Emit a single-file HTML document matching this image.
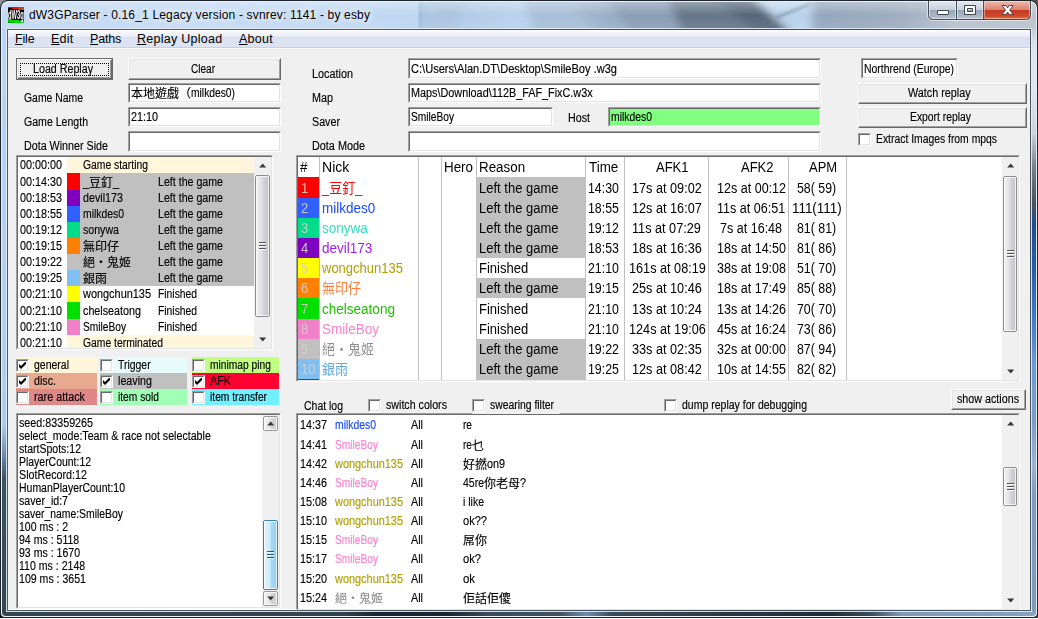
<!DOCTYPE html><html><head><meta charset="utf-8"><title>dW3GParser</title><style>
*{box-sizing:border-box;margin:0;padding:0}
html,body{width:1038px;height:619px;overflow:hidden;background:#fff}
body{position:relative;font-family:"Liberation Sans","Noto Sans CJK TC",sans-serif;font-size:12px;color:#000;line-height:13px}
.a{position:absolute;white-space:nowrap}
.t{position:absolute;white-space:nowrap;line-height:13px;transform-origin:0 0;-webkit-text-stroke:.15px}
.c{font-size:12px;transform:scaleX(.999)}
.edit{position:absolute;background:#fff;border:1px solid;border-color:#a0a0a0 #fff #fff #a0a0a0;overflow:hidden}
.edit:before{content:"";position:absolute;left:0;top:0;right:0;bottom:0;border:1px solid;border-color:#696969 #e3e3e3 #e3e3e3 #696969;pointer-events:none;z-index:3}
.btn{position:absolute;background:#f0f0f0;border:1px solid;border-color:#fff #696969 #696969 #fff;text-align:center}
.btn:before{content:"";position:absolute;left:0;top:0;right:0;bottom:0;border:1px solid;border-color:#e3e3e3 #a0a0a0 #a0a0a0 #e3e3e3}
.cb{position:absolute;width:13px;height:13px;background:#fff;border:1px solid;border-color:#a0a0a0 #fff #fff #a0a0a0}
.cb:before{content:"";position:absolute;left:0;top:0;right:0;bottom:0;border:1px solid;border-color:#696969 #e3e3e3 #e3e3e3 #696969}
.cb svg{position:absolute;left:2px;top:2px}
.tb{font-size:13px;line-height:15px}
.tb .t{line-height:15px}
.sb{position:absolute;background:#f0f0f0}
.thumb{position:absolute;border:1px solid #8e8e8e;border-radius:2px;background:linear-gradient(90deg,#f1f1f1 0,#e3e3e5 40%,#d3d3d7 60%,#c1c1c6 100%)}
.thumb:before{content:"";position:absolute;left:0;top:0;right:0;bottom:0;border:1px solid rgba(255,255,255,.75);border-radius:1px}
.thumb.hot{border-color:#3c7fb1;background:linear-gradient(90deg,#e0f3fd 0,#cfeafa 48%,#a8daf5 52%,#95cff0 100%)}
.grip{position:absolute;left:3px;width:7px;height:8px;top:50%;margin-top:-4px;background:linear-gradient(180deg,#50545a 0,#50545a 1px,#fff 1px,#fff 2px,transparent 2px,transparent 3px,#50545a 3px,#50545a 4px,#fff 4px,#fff 5px,transparent 5px,transparent 6px,#50545a 6px,#50545a 7px,#fff 7px,#fff 8px)}
.hot .grip{background:linear-gradient(180deg,#1c5a8c 0,#1c5a8c 1px,#e8f6fd 1px,#e8f6fd 2px,transparent 2px,transparent 3px,#1c5a8c 3px,#1c5a8c 4px,#e8f6fd 4px,#e8f6fd 5px,transparent 5px,transparent 6px,#1c5a8c 6px,#1c5a8c 7px,#e8f6fd 7px,#e8f6fd 8px)}
.sbtn{position:absolute;width:15px;height:15px;border:1px solid #989898;border-radius:2px;background:linear-gradient(90deg,#f3f3f3 0,#e4e4e6 48%,#d6d6d9 52%,#cdcdd0 100%)}
.sbtn:before{content:"";position:absolute;left:0;top:0;right:0;bottom:0;border:1px solid rgba(255,255,255,.8);border-radius:1px}
</style></head><body>
<svg class="a" style="left:0;top:0" width="1038" height="619" viewBox="0 0 1038 619"><defs><linearGradient id="gl" x1="0" y1="0" x2="0" y2="1"><stop offset="0" stop-color="#bcd4f1"/><stop offset=".68" stop-color="#aecbee"/><stop offset=".72" stop-color="#7d9ab8"/><stop offset=".77" stop-color="#3e5463"/><stop offset="1" stop-color="#34464f"/></linearGradient><linearGradient id="gr" x1="0" y1="0" x2="0" y2="1"><stop offset="0" stop-color="#c3ccd6"/><stop offset=".03" stop-color="#dde3e9"/><stop offset=".1" stop-color="#e3e7eb"/><stop offset=".18" stop-color="#cdd3d9"/><stop offset=".24" stop-color="#767e87"/><stop offset=".3" stop-color="#4a525b"/><stop offset=".335" stop-color="#1d4e96"/><stop offset=".42" stop-color="#2460b0"/><stop offset=".5" stop-color="#3f7cc8"/><stop offset=".58" stop-color="#6a9cd6"/><stop offset=".68" stop-color="#7c9fc6"/><stop offset=".75" stop-color="#9ab4d2"/><stop offset=".8" stop-color="#7c9cc0"/><stop offset="1" stop-color="#7f9bb8"/></linearGradient><linearGradient id="gb" x1="0" y1="0" x2="1" y2="0"><stop offset="0" stop-color="#34464f"/><stop offset=".33" stop-color="#32444e"/><stop offset=".36" stop-color="#1b2630"/><stop offset=".43" stop-color="#1b2630"/><stop offset=".47" stop-color="#3a4c58"/><stop offset=".54" stop-color="#41535f"/><stop offset=".565" stop-color="#6f8fb0"/><stop offset=".59" stop-color="#3a4c58"/><stop offset=".7" stop-color="#2a3a45"/><stop offset=".8" stop-color="#1f2c36"/><stop offset=".84" stop-color="#3a4c5a"/><stop offset=".87" stop-color="#7f9bb8"/><stop offset="1" stop-color="#86a2c0"/></linearGradient><linearGradient id="gt" x1="0" y1="0" x2="1" y2="0"><stop offset="0" stop-color="#bdd5f1"/><stop offset=".2" stop-color="#c2d9f3"/><stop offset=".402" stop-color="#bad4f1"/><stop offset=".405" stop-color="#a4c0df"/><stop offset=".42" stop-color="#adc8e6"/><stop offset=".46" stop-color="#b0cae8"/><stop offset=".5" stop-color="#b6d0ec"/><stop offset=".55" stop-color="#a0b8d3"/><stop offset=".62" stop-color="#8aa0b9"/><stop offset=".8" stop-color="#8fa3bb"/><stop offset=".87" stop-color="#9aaabd"/><stop offset=".92" stop-color="#b3bfcd"/><stop offset="1" stop-color="#b6c0cb"/></linearGradient><linearGradient id="gv" x1="0" y1="0" x2="0" y2="1"><stop offset="0" stop-color="#fff" stop-opacity=".35"/><stop offset=".5" stop-color="#fff" stop-opacity=".05"/><stop offset="1" stop-color="#fff" stop-opacity=".12"/></linearGradient><filter id="bl" x="-5%" y="-50%" width="110%" height="200%"><feGaussianBlur stdDeviation="5 3"/></filter><filter id="bl2" x="-5%" y="-50%" width="110%" height="200%"><feGaussianBlur stdDeviation="1.5"/></filter><clipPath id="ct"><path d="M2 28V8a6 6 0 0 1 6-6H1030a6 6 0 0 1 6 6V28z"/></clipPath></defs><rect x="0" y="0" width="12" height="12" fill="#8c9196"/><rect x="1026" y="0" width="12" height="12" fill="#55524f"/><rect x="0" y="606" width="12" height="12" fill="#05080a"/><rect x="1026" y="606" width="12" height="12" fill="#4a4d50"/><path d="M0 618V8a8 8 0 0 1 8-8H1030a8 8 0 0 1 8 8V614a4 4 0 0 1-4 4H4a4 4 0 0 1-4-4z" fill="#1d242b"/><path d="M1 613V8a7 7 0 0 1 7-7H1030a7 7 0 0 1 7 7V613a4 4 0 0 1-4 4H5a4 4 0 0 1-4-4z" fill="#eaf1f8"/><path d="M2 612V8a6 6 0 0 1 6-6H1030a6 6 0 0 1 6 6V612a4 4 0 0 1-4 4H6a4 4 0 0 1-4-4z" fill="url(#gt)"/><g clip-path="url(#ct)"><g filter="url(#bl)"><polygon points="600,-10 680,-10 700,40 640,40" fill="#8499b2"/><polygon points="665,-10 725,-10 795,40 685,40" fill="#5d6f83"/><polygon points="705,-10 745,-10 800,40 765,40" fill="#4f6074"/><polygon points="745,-10 812,-10 812,40 800,40" fill="#bcd6ee"/><polygon points="770,8 812,2 812,40 800,40" fill="#b6d1ec"/><polygon points="440,-10 470,-10 450,40 425,40" fill="#a9c1dd"/><polygon points="520,-10 560,-10 600,40 540,40" fill="#a4bbd6"/></g><rect x="419" y="2" width="2" height="26" fill="#8fa9c8" opacity=".7" filter="url(#bl2)"/><path d="M775 18L810 4" stroke="#7f93a8" stroke-width="2.500" filter="url(#bl2)"/><rect x="2" y="2" width="1034" height="26" fill="url(#gv)"/></g><rect x="2" y="28" width="5" height="584" fill="url(#gl)"/><rect x="1031" y="28" width="5" height="584" fill="url(#gr)"/><path d="M2 611H1036V612a4 4 0 0 1-4 4H6a4 4 0 0 1-4-4z" fill="url(#gb)"/><rect x="2" y="440" width="5" height="176" fill="url(#gl)" opacity="0"/><rect x="6.500" y="28.500" width="1025" height="583" fill="none" stroke="#e4edf6" stroke-opacity=".9"/><rect x="7.500" y="29.500" width="1023" height="581" fill="none" stroke="#27323b" stroke-opacity=".75"/></svg>
<div class="a" id="client" style="left:8px;top:30px;width:1022px;height:580px;background:#f0f0f0"></div>
<div class="a" style="left:8px;top:30px;width:1022px;height:19px;background:linear-gradient(180deg,#fff 0,#f4f6fb 2px,#e9ecf6 7px,#dae0f0 7px,#dfe4f3 17px,#c9cfe0 17px,#c9cfe0 18px,#f6f6f9 18px)"></div>
<svg class="a" style="left:8px;top:7px" width="16" height="16" viewBox="0 0 16 16"><defs><linearGradient id="icr" x1="0" y1="0" x2="1" y2="0"><stop offset="0" stop-color="#ff0000"/><stop offset=".55" stop-color="#f00808"/><stop offset=".75" stop-color="#b04818"/><stop offset="1" stop-color="#a85a20"/></linearGradient><linearGradient id="icg" x1="0" y1="1" x2="1" y2="0"><stop offset="0" stop-color="#007000"/><stop offset=".3" stop-color="#00d800"/><stop offset="1" stop-color="#00f000"/></linearGradient></defs><rect width="16" height="16" fill="#000"/><path d="M0 0H16V3H10V2H4V1H0z" fill="url(#icr)"/><path d="M0 16H16V14H11V13H4V12H0z" fill="url(#icg)"/><g opacity=".99"><text transform="scale(.58,1.35)" x="0" y="8.800" font-family="Liberation Sans,sans-serif" font-weight="bold" font-size="10" fill="#fff" style="-webkit-text-stroke:0">dW3g</text></g></svg>
<div class="t" style="left:29px;top:8px;letter-spacing:0.167px;text-shadow:0 0 6px #fff,0 0 10px #fff;font-size:12px;line-height:14px;-webkit-text-stroke:0;">dW3GParser - 0.16_1 Legacy version - svnrev: 1141 - by esby</div>
<div class="t" style="left:15px;top:32px;font-size:12.5px;line-height:15px;-webkit-text-stroke:0;letter-spacing:-0.160px"><u>F</u>ile</div>
<div class="t" style="left:51px;top:32px;font-size:12.5px;line-height:15px;-webkit-text-stroke:0;letter-spacing:0.240px"><u>E</u>dit</div>
<div class="t" style="left:90px;top:32px;font-size:12.5px;line-height:15px;-webkit-text-stroke:0;letter-spacing:-0.193px"><u>P</u>aths</div>
<div class="t" style="left:137px;top:32px;font-size:12.5px;line-height:15px;-webkit-text-stroke:0;letter-spacing:0.270px"><u>R</u>eplay Upload</div>
<div class="t" style="left:239px;top:32px;font-size:12.5px;line-height:15px;-webkit-text-stroke:0;letter-spacing:0.267px"><u>A</u>bout</div>
<svg class="a" style="left:924px;top:0" width="112" height="24" viewBox="924 0 112 24"><defs><linearGradient id="cbg" x1="0" y1="0" x2="0" y2="1"><stop offset="0" stop-color="#e3e9f0"/><stop offset=".45" stop-color="#c6d0dc"/><stop offset=".5" stop-color="#98a6b7"/><stop offset="1" stop-color="#b9c4d1"/></linearGradient><linearGradient id="cbr" x1="0" y1="0" x2="0" y2="1"><stop offset="0" stop-color="#efb9ac"/><stop offset=".45" stop-color="#dc8371"/><stop offset=".5" stop-color="#c53b22"/><stop offset=".8" stop-color="#cf4b2c"/><stop offset="1" stop-color="#e08a5a"/></linearGradient><clipPath id="cbc"><path d="M928.500 1V15.500a4 4 0 0 0 4 4H1026.500a4 4 0 0 0 4-4V1z"/></clipPath></defs><path d="M927.500 1V16a4.500 4.500 0 0 0 4.500 4.500H1027a4.500 4.500 0 0 0 4.500-4.500V1" fill="none" stroke="#fff" stroke-opacity=".55"/><g clip-path="url(#cbc)"><rect x="928" y="1" width="56" height="19" fill="url(#cbg)"/><rect x="984" y="1" width="47" height="19" fill="url(#cbr)"/><rect x="929.500" y="1.500" width="26" height="17" fill="none" stroke="#fff" stroke-opacity=".5"/><rect x="957.500" y="1.500" width="25" height="17" fill="none" stroke="#fff" stroke-opacity=".5"/><rect x="984.500" y="1.500" width="45" height="17" rx="2" fill="none" stroke="#fff" stroke-opacity=".4"/></g><path d="M928.500 1V15.500a4 4 0 0 0 4 4H1026.500a4 4 0 0 0 4-4V1" fill="none" stroke="#434d57"/><path d="M956.500 1V19M983.500 1V19" stroke="#434d57"/><rect x="937.500" y="10.500" width="11" height="4" rx=".5" fill="#fff" stroke="#3e4852"/><path d="M964.500 5.500h11v9h-11zM967.500 8.500v3h5v-3z" fill="#fff" fill-rule="evenodd" stroke="#3e4852"/><path d="M1002 5.500h4l1.600 2.400 1.600-2.400h4l-3.500 4.500 3.500 4.500h-4l-1.600-2.400-1.600 2.400h-4l3.500-4.500z" fill="#fff" stroke="#4a3a3a" stroke-width=".9"/></svg>
<div class="btn" style="left:16px;top:58px;width:97px;height:22px;border-color:#696969;background:#f0f0f0"><div class="a" style="left:0;top:0;right:0;bottom:0;border:1px solid;border-color:#fff #696969 #696969 #fff"></div><div class="a" style="left:1px;top:1px;right:1px;bottom:1px;border:1px solid;border-color:#e3e3e3 #a0a0a0 #a0a0a0 #e3e3e3"></div><div class="a" style="left:3px;top:4px;right:3px;bottom:3px;border:1px dotted #000"></div></div>
<div class="t" style="left:33px;top:63px;transform:scaleX(0.8904);">Load Replay</div>
<div class="btn" style="left:128px;top:58px;width:153px;height:22px"></div>
<div class="t" style="left:191px;top:63px;transform:scaleX(0.8369);">Clear</div>
<div class="t" style="left:24px;top:92px;transform:scaleX(0.8674);">Game Name</div>
<div class="t" style="left:24px;top:116px;transform:scaleX(0.8802);">Game Length</div>
<div class="t" style="left:24px;top:140px;transform:scaleX(0.8932);">Dota Winner Side</div>
<div class="edit" style="left:128px;top:83px;width:153px;height:20px"></div>
<div class="t c" style="left:131px;top:88px;">本地遊戲（</div>
<div class="t" style="left:191px;top:87px;transform:scaleX(0.8569);">milkdes0)</div>
<div class="edit" style="left:128px;top:107px;width:153px;height:20px"></div>
<div class="t" style="left:131px;top:111px;transform:scaleX(0.8991);">21:10</div>
<div class="edit" style="left:128px;top:131px;width:153px;height:21px"></div>
<div class="t" style="left:312px;top:68px;transform:scaleX(0.9037);">Location</div>
<div class="t" style="left:312px;top:92px;transform:scaleX(0.8996);">Map</div>
<div class="t" style="left:312px;top:116px;transform:scaleX(0.8932);">Saver</div>
<div class="t" style="left:312px;top:140px;transform:scaleX(0.9029);">Dota Mode</div>
<div class="edit" style="left:408px;top:58px;width:413px;height:21px"></div>
<div class="t" style="left:411px;top:63px;transform:scaleX(0.9221);">C:\Users\Alan.DT\Desktop\SmileBoy .w3g</div>
<div class="edit" style="left:408px;top:83px;width:413px;height:20px"></div>
<div class="t" style="left:411px;top:87px;transform:scaleX(0.9026);">Maps\Download\112B_FAF_FixC.w3x</div>
<div class="edit" style="left:408px;top:107px;width:145px;height:20px"></div>
<div class="t" style="left:411px;top:111px;transform:scaleX(0.8484);">SmileBoy</div>
<div class="t" style="left:568px;top:112px;transform:scaleX(0.8916);">Host</div>
<div class="edit" style="left:608px;top:107px;width:213px;height:20px;background:#80ff80"></div>
<div class="t" style="left:611px;top:111px;transform:scaleX(0.8659);">milkdes0</div>
<div class="edit" style="left:408px;top:131px;width:413px;height:21px"></div>
<div class="edit" style="left:861px;top:58px;width:97px;height:21px"></div>
<div class="t" style="left:864px;top:63px;transform:scaleX(0.8706);">Northrend (Europe)</div>
<div class="btn" style="left:858px;top:83px;width:169px;height:21px"></div>
<div class="t" style="left:908px;top:87px;transform:scaleX(0.8997);">Watch replay</div>
<div class="btn" style="left:858px;top:107px;width:169px;height:21px"></div>
<div class="t" style="left:910px;top:111px;transform:scaleX(0.8628);">Export replay</div>
<div class="cb" style="left:858px;top:133px"></div>
<div class="t" style="left:876px;top:133px;transform:scaleX(0.8640);">Extract Images from mpqs</div>
<div class="edit" id="evlist" style="left:16px;top:155px;width:257px;height:195px">
<div class="a" style="left:50px;top:1px;width:187px;height:16px;background:#fff6dc"></div>
<div class="t" style="left:3px;top:3px;transform:scaleX(0.8991);">00:00:00</div>
<div class="t" style="left:65.5px;top:3px;transform:scaleX(0.8625);">Game starting</div>
<div class="a" style="left:50px;top:17px;width:187px;height:17px;background:#c0c0c0"></div>
<div class="a" style="left:50px;top:17px;width:13px;height:17px;background:#ff0000"></div>
<div class="t" style="left:3px;top:20px;transform:scaleX(0.8991);">00:14:30</div>
<div class="t" style="left:65.5px;top:20px;transform:scaleX(0.8990);">_</div>
<div class="t c" style="left:71.5px;top:21px;">豆釘</div>
<div class="t" style="left:95.5px;top:20px;transform:scaleX(0.8990);">_</div>
<div class="t" style="left:141px;top:20px;transform:scaleX(0.8858);">Left the game</div>
<div class="a" style="left:50px;top:34px;width:187px;height:16px;background:#c0c0c0"></div>
<div class="a" style="left:50px;top:34px;width:13px;height:16px;background:#8000c0"></div>
<div class="t" style="left:3px;top:36px;transform:scaleX(0.8991);">00:18:53</div>
<div class="t" style="left:65.5px;top:36px;transform:scaleX(0.8948);">devil173</div>
<div class="t" style="left:141px;top:36px;transform:scaleX(0.8858);">Left the game</div>
<div class="a" style="left:50px;top:50px;width:187px;height:16px;background:#c0c0c0"></div>
<div class="a" style="left:50px;top:50px;width:13px;height:16px;background:#3060ff"></div>
<div class="t" style="left:3px;top:52px;transform:scaleX(0.8991);">00:18:55</div>
<div class="t" style="left:65.5px;top:52px;transform:scaleX(0.8659);">milkdes0</div>
<div class="t" style="left:141px;top:52px;transform:scaleX(0.8858);">Left the game</div>
<div class="a" style="left:50px;top:66px;width:187px;height:16px;background:#c0c0c0"></div>
<div class="a" style="left:50px;top:66px;width:13px;height:16px;background:#00dc8c"></div>
<div class="t" style="left:3px;top:68px;transform:scaleX(0.8991);">00:19:12</div>
<div class="t" style="left:65.5px;top:68px;transform:scaleX(0.8848);">sonywa</div>
<div class="t" style="left:141px;top:68px;transform:scaleX(0.8858);">Left the game</div>
<div class="a" style="left:50px;top:82px;width:187px;height:16px;background:#c0c0c0"></div>
<div class="a" style="left:50px;top:82px;width:13px;height:16px;background:#ff8000"></div>
<div class="t" style="left:3px;top:84px;transform:scaleX(0.8991);">00:19:15</div>
<div class="t c" style="left:65.5px;top:85px;">無印仔</div>
<div class="t" style="left:141px;top:84px;transform:scaleX(0.8858);">Left the game</div>
<div class="a" style="left:50px;top:98px;width:187px;height:16px;background:#c0c0c0"></div>
<div class="a" style="left:50px;top:98px;width:13px;height:16px;background:#c0c0c0"></div>
<div class="t" style="left:3px;top:100px;transform:scaleX(0.8991);">00:19:22</div>
<div class="t c" style="left:65.5px;top:101px;">絕‧鬼姬</div>
<div class="t" style="left:141px;top:100px;transform:scaleX(0.8858);">Left the game</div>
<div class="a" style="left:50px;top:114px;width:187px;height:16px;background:#c0c0c0"></div>
<div class="a" style="left:50px;top:114px;width:13px;height:16px;background:#80c0f0"></div>
<div class="t" style="left:3px;top:116px;transform:scaleX(0.8991);">00:19:25</div>
<div class="t c" style="left:65.5px;top:117px;">銀雨</div>
<div class="t" style="left:141px;top:116px;transform:scaleX(0.8858);">Left the game</div>
<div class="a" style="left:50px;top:130px;width:187px;height:16px;background:#fff"></div>
<div class="a" style="left:50px;top:130px;width:13px;height:16px;background:#ffff00"></div>
<div class="t" style="left:3px;top:132px;transform:scaleX(0.8991);">00:21:10</div>
<div class="t" style="left:65.5px;top:132px;transform:scaleX(0.9099);">wongchun135</div>
<div class="t" style="left:141px;top:132px;transform:scaleX(0.8598);">Finished</div>
<div class="a" style="left:50px;top:146px;width:187px;height:17px;background:#fff"></div>
<div class="a" style="left:50px;top:146px;width:13px;height:17px;background:#00e000"></div>
<div class="t" style="left:3px;top:149px;transform:scaleX(0.8991);">00:21:10</div>
<div class="t" style="left:65.5px;top:149px;transform:scaleX(0.8962);">chelseatong</div>
<div class="t" style="left:141px;top:149px;transform:scaleX(0.8598);">Finished</div>
<div class="a" style="left:50px;top:163px;width:187px;height:16px;background:#fff"></div>
<div class="a" style="left:50px;top:163px;width:13px;height:16px;background:#f080c8"></div>
<div class="t" style="left:3px;top:165px;transform:scaleX(0.8991);">00:21:10</div>
<div class="t" style="left:65.5px;top:165px;transform:scaleX(0.8484);">SmileBoy</div>
<div class="t" style="left:141px;top:165px;transform:scaleX(0.8598);">Finished</div>
<div class="a" style="left:50px;top:179px;width:187px;height:16px;background:#fff6dc"></div>
<div class="t" style="left:3px;top:181px;transform:scaleX(0.8991);">00:21:10</div>
<div class="t" style="left:65.5px;top:181px;transform:scaleX(0.8629);">Game terminated</div>
<div class="sb" style="left:237px;top:1px;width:17px;height:191px"><svg class="a" style="left:5px;top:6px" width="8" height="5" viewBox="0 0 8 5"><path d="M0.200 4.500L3.700 0.400L7.200 4.500z" fill="#383838"/></svg><svg class="a" style="left:5px;top:180px" width="8" height="5" viewBox="0 0 8 5"><path d="M0.200 0.500L3.700 4.600L7.200 0.500z" fill="#383838"/></svg><div class="thumb" style="left:1px;top:18px;width:15px;height:142px"><div class="grip"></div></div></div>
</div>
<div class="a" style="left:16px;top:357px;width:81px;height:16px;background:#fff6dc"></div>
<div class="cb" style="left:16px;top:359px"><svg width="7" height="7" viewBox="0 0 7 7"><path d="M0 2v3l2 2 5-5V-1L2 4z" fill="#000"/></svg></div>
<div class="t" style="left:34px;top:359px;transform:scaleX(0.8743);">general</div>
<div class="a" style="left:100px;top:357px;width:87px;height:16px;background:#e8fbfb"></div>
<div class="cb" style="left:100px;top:359px"></div>
<div class="t" style="left:118px;top:359px;transform:scaleX(0.8682);">Trigger</div>
<div class="a" style="left:192px;top:357px;width:87px;height:16px;background:#c0ff80"></div>
<div class="cb" style="left:192px;top:359px"></div>
<div class="t" style="left:210px;top:359px;transform:scaleX(0.8547);">minimap ping</div>
<div class="a" style="left:16px;top:373px;width:81px;height:16px;background:#e9a98e"></div>
<div class="cb" style="left:16px;top:375px"><svg width="7" height="7" viewBox="0 0 7 7"><path d="M0 2v3l2 2 5-5V-1L2 4z" fill="#000"/></svg></div>
<div class="t" style="left:34px;top:375px;transform:scaleX(0.8916);">disc.</div>
<div class="a" style="left:100px;top:373px;width:87px;height:16px;background:#c0c0c0"></div>
<div class="cb" style="left:100px;top:375px"><svg width="7" height="7" viewBox="0 0 7 7"><path d="M0 2v3l2 2 5-5V-1L2 4z" fill="#000"/></svg></div>
<div class="t" style="left:118px;top:375px;transform:scaleX(0.8941);">leaving</div>
<div class="a" style="left:192px;top:373px;width:87px;height:16px;background:#ff0030"></div>
<div class="cb" style="left:192px;top:375px"><svg width="7" height="7" viewBox="0 0 7 7"><path d="M0 2v3l2 2 5-5V-1L2 4z" fill="#000"/></svg></div>
<div class="t" style="left:210px;top:375px;transform:scaleX(0.8998);">AFK</div>
<div class="a" style="left:16px;top:389px;width:81px;height:16px;background:#e08888"></div>
<div class="cb" style="left:16px;top:391px"></div>
<div class="t" style="left:34px;top:391px;transform:scaleX(0.8996);">rare attack</div>
<div class="a" style="left:100px;top:389px;width:87px;height:16px;background:#a0ffb4"></div>
<div class="cb" style="left:100px;top:391px"></div>
<div class="t" style="left:118px;top:391px;transform:scaleX(0.8539);">item sold</div>
<div class="a" style="left:192px;top:389px;width:87px;height:16px;background:#70f0ff"></div>
<div class="cb" style="left:192px;top:391px"></div>
<div class="t" style="left:210px;top:391px;transform:scaleX(0.8548);">item transfer</div>
<div class="edit" id="info" style="left:16px;top:413px;width:265px;height:196px">
<div class="t" style="left:2px;top:3px;transform:scaleX(0.8943);">seed:83359265</div>
<div class="t" style="left:2px;top:16px;transform:scaleX(0.8876);">select_mode:Team &amp; race not selectable</div>
<div class="t" style="left:2px;top:29px;transform:scaleX(0.8769);">startSpots:12</div>
<div class="t" style="left:2px;top:42px;transform:scaleX(0.8704);">PlayerCount:12</div>
<div class="t" style="left:2px;top:55px;transform:scaleX(0.8942);">SlotRecord:12</div>
<div class="t" style="left:2px;top:68px;transform:scaleX(0.8731);">HumanPlayerCount:10</div>
<div class="t" style="left:2px;top:81px;transform:scaleX(0.8850);">saver_id:7</div>
<div class="t" style="left:2px;top:94px;transform:scaleX(0.8663);">saver_name:SmileBoy</div>
<div class="t" style="left:2px;top:107px;transform:scaleX(0.8746);">100 ms : 2</div>
<div class="t" style="left:2px;top:120px;transform:scaleX(0.8793);">94 ms : 5118</div>
<div class="t" style="left:2px;top:133px;transform:scaleX(0.8793);">93 ms : 1670</div>
<div class="t" style="left:2px;top:146px;transform:scaleX(0.8810);">110 ms : 2148</div>
<div class="t" style="left:2px;top:159px;transform:scaleX(0.8810);">109 ms : 3651</div>
<div class="sb" style="left:245px;top:1px;width:17px;height:192px"><div class="sbtn" style="left:1px;top:1px"></div><div class="sbtn" style="left:1px;top:176px"></div><svg class="a" style="left:5px;top:6px" width="8" height="5" viewBox="0 0 8 5"><path d="M0.200 4.500L3.700 0.400L7.200 4.500z" fill="#383838"/></svg><svg class="a" style="left:5px;top:181px" width="8" height="5" viewBox="0 0 8 5"><path d="M0.200 0.500L3.700 4.600L7.200 0.500z" fill="#383838"/></svg><div class="thumb hot" style="left:1px;top:105px;width:15px;height:70px"><div class="grip"></div></div></div>
</div>
<div class="edit tb" id="ptable" style="left:296px;top:155px;width:724px;height:227px">
<div class="a" style="left:1px;top:1px;width:704px;height:223px;overflow:hidden;background:#fff">
<div class="a" style="left:21px;top:0;width:1px;height:223px;background:#c0c0c0"></div>
<div class="a" style="left:120px;top:0;width:1px;height:223px;background:#c0c0c0"></div>
<div class="a" style="left:143px;top:0;width:1px;height:223px;background:#c0c0c0"></div>
<div class="a" style="left:178px;top:0;width:1px;height:223px;background:#c0c0c0"></div>
<div class="a" style="left:287px;top:0;width:1px;height:223px;background:#c0c0c0"></div>
<div class="a" style="left:326px;top:0;width:1px;height:223px;background:#c0c0c0"></div>
<div class="a" style="left:410px;top:0;width:1px;height:223px;background:#c0c0c0"></div>
<div class="a" style="left:490px;top:0;width:1px;height:223px;background:#c0c0c0"></div>
<div class="a" style="left:548px;top:0;width:1px;height:223px;background:#c0c0c0"></div>
<div class="t" style="left:2px;top:2px;font-size:14px;line-height:16px;-webkit-text-stroke:0;transform:scaleX(0.9565);">#</div>
<div class="t" style="left:24px;top:2px;font-size:14px;line-height:16px;-webkit-text-stroke:0;transform:scaleX(1.0029);">Nick</div>
<div class="t" style="left:146px;top:2px;font-size:14px;line-height:16px;-webkit-text-stroke:0;transform:scaleX(0.9565);">Hero</div>
<div class="t" style="left:181px;top:2px;font-size:14px;line-height:16px;-webkit-text-stroke:0;transform:scaleX(0.9565);">Reason</div>
<div class="t" style="left:291px;top:2px;font-size:14px;line-height:16px;-webkit-text-stroke:0;transform:scaleX(0.9565);">Time</div>
<div class="t" style="left:357.7px;top:2px;font-size:14px;line-height:16px;-webkit-text-stroke:0;transform:scaleX(0.9286);">AFK1</div>
<div class="t" style="left:442.7px;top:2px;font-size:14px;line-height:16px;-webkit-text-stroke:0;transform:scaleX(0.9286);">AFK2</div>
<div class="t" style="left:511.4px;top:2px;font-size:14px;line-height:16px;-webkit-text-stroke:0;transform:scaleX(0.9286);">APM</div>
<div class="a" style="left:0;top:20px;width:21px;height:21px;background:#ff0000"></div>
<div class="t" style="left:2.5px;top:23px;font-size:14px;line-height:16px;-webkit-text-stroke:0;transform:scaleX(0.9286);color:rgba(214,208,200,.9);-webkit-text-stroke:0">1</div>
<div class="t" style="left:24px;top:23px;font-size:14px;line-height:16px;-webkit-text-stroke:0;transform:scaleX(0.9286);color:#ff0000">_豆釘_</div>
<div class="a" style="left:179px;top:20px;width:108px;height:21px;background:#c0c0c0"></div>
<div class="t" style="left:181px;top:23px;font-size:14px;line-height:16px;-webkit-text-stroke:0;transform:scaleX(0.9286);">Left the game</div>
<div class="t" style="left:290px;top:23px;font-size:14px;line-height:16px;-webkit-text-stroke:0;transform:scaleX(0.8822);">14:30</div>
<div class="t" style="left:334.4px;top:23px;font-size:14px;line-height:16px;-webkit-text-stroke:0;transform:scaleX(0.9054);">17s at 09:02</div>
<div class="t" style="left:418.9px;top:23px;font-size:14px;line-height:16px;-webkit-text-stroke:0;transform:scaleX(0.8961);">12s at 00:12</div>
<div class="t" style="left:498.9px;top:23px;font-size:14px;line-height:16px;-webkit-text-stroke:0;transform:scaleX(0.8822);">58( 59)</div>
<div class="a" style="left:0;top:41px;width:21px;height:20px;background:#3060ff"></div>
<div class="t" style="left:2.5px;top:43px;font-size:14px;line-height:16px;-webkit-text-stroke:0;transform:scaleX(0.9286);color:rgba(214,208,200,.9);-webkit-text-stroke:0">2</div>
<div class="t" style="left:24px;top:43px;font-size:14px;line-height:16px;-webkit-text-stroke:0;transform:scaleX(0.9657);color:#1848ff">milkdes0</div>
<div class="a" style="left:179px;top:41px;width:108px;height:20px;background:#c0c0c0"></div>
<div class="t" style="left:181px;top:43px;font-size:14px;line-height:16px;-webkit-text-stroke:0;transform:scaleX(0.9286);">Left the game</div>
<div class="t" style="left:290px;top:43px;font-size:14px;line-height:16px;-webkit-text-stroke:0;transform:scaleX(0.8822);">18:55</div>
<div class="t" style="left:334.4px;top:43px;font-size:14px;line-height:16px;-webkit-text-stroke:0;transform:scaleX(0.9054);">12s at 16:07</div>
<div class="t" style="left:418.9px;top:43px;font-size:14px;line-height:16px;-webkit-text-stroke:0;transform:scaleX(0.8961);">11s at 06:51</div>
<div class="t" style="left:494.2px;top:43px;font-size:14px;line-height:16px;-webkit-text-stroke:0;transform:scaleX(0.9565);">111(111)</div>
<div class="a" style="left:0;top:61px;width:21px;height:20px;background:#00dc8c"></div>
<div class="t" style="left:2.5px;top:63px;font-size:14px;line-height:16px;-webkit-text-stroke:0;transform:scaleX(0.9286);color:rgba(214,208,200,.9);-webkit-text-stroke:0">3</div>
<div class="t" style="left:24px;top:63px;font-size:14px;line-height:16px;-webkit-text-stroke:0;transform:scaleX(0.9657);color:#30e0c0">sonywa</div>
<div class="a" style="left:179px;top:61px;width:108px;height:20px;background:#c0c0c0"></div>
<div class="t" style="left:181px;top:63px;font-size:14px;line-height:16px;-webkit-text-stroke:0;transform:scaleX(0.9286);">Left the game</div>
<div class="t" style="left:290px;top:63px;font-size:14px;line-height:16px;-webkit-text-stroke:0;transform:scaleX(0.8822);">19:12</div>
<div class="t" style="left:334.4px;top:63px;font-size:14px;line-height:16px;-webkit-text-stroke:0;transform:scaleX(0.9054);">11s at 07:29</div>
<div class="t" style="left:422.4px;top:63px;font-size:14px;line-height:16px;-webkit-text-stroke:0;transform:scaleX(0.8961);">7s at 16:48</div>
<div class="t" style="left:498.9px;top:63px;font-size:14px;line-height:16px;-webkit-text-stroke:0;transform:scaleX(0.8822);">81( 81)</div>
<div class="a" style="left:0;top:81px;width:21px;height:20px;background:#8000c0"></div>
<div class="t" style="left:2.5px;top:83px;font-size:14px;line-height:16px;-webkit-text-stroke:0;transform:scaleX(0.9286);color:rgba(214,208,200,.9);-webkit-text-stroke:0">4</div>
<div class="t" style="left:24px;top:83px;font-size:14px;line-height:16px;-webkit-text-stroke:0;transform:scaleX(0.9657);color:#a020f0">devil173</div>
<div class="a" style="left:179px;top:81px;width:108px;height:20px;background:#c0c0c0"></div>
<div class="t" style="left:181px;top:83px;font-size:14px;line-height:16px;-webkit-text-stroke:0;transform:scaleX(0.9286);">Left the game</div>
<div class="t" style="left:290px;top:83px;font-size:14px;line-height:16px;-webkit-text-stroke:0;transform:scaleX(0.8822);">18:53</div>
<div class="t" style="left:334.4px;top:83px;font-size:14px;line-height:16px;-webkit-text-stroke:0;transform:scaleX(0.9054);">18s at 16:36</div>
<div class="t" style="left:418.9px;top:83px;font-size:14px;line-height:16px;-webkit-text-stroke:0;transform:scaleX(0.8961);">18s at 14:50</div>
<div class="t" style="left:498.9px;top:83px;font-size:14px;line-height:16px;-webkit-text-stroke:0;transform:scaleX(0.8822);">81( 86)</div>
<div class="a" style="left:0;top:101px;width:21px;height:20px;background:#ffff00"></div>
<div class="t" style="left:2.5px;top:103px;font-size:14px;line-height:16px;-webkit-text-stroke:0;transform:scaleX(0.9286);color:rgba(214,208,200,.9);-webkit-text-stroke:0">5</div>
<div class="t" style="left:24px;top:103px;font-size:14px;line-height:16px;-webkit-text-stroke:0;transform:scaleX(0.9286);color:#b0a000">wongchun135</div>
<div class="t" style="left:181px;top:103px;font-size:14px;line-height:16px;-webkit-text-stroke:0;transform:scaleX(0.9286);">Finished</div>
<div class="t" style="left:290px;top:103px;font-size:14px;line-height:16px;-webkit-text-stroke:0;transform:scaleX(0.8822);">21:10</div>
<div class="t" style="left:330.9px;top:103px;font-size:14px;line-height:16px;-webkit-text-stroke:0;transform:scaleX(0.9054);">161s at 08:19</div>
<div class="t" style="left:418.9px;top:103px;font-size:14px;line-height:16px;-webkit-text-stroke:0;transform:scaleX(0.8961);">38s at 19:08</div>
<div class="t" style="left:498.9px;top:103px;font-size:14px;line-height:16px;-webkit-text-stroke:0;transform:scaleX(0.8822);">51( 70)</div>
<div class="a" style="left:0;top:121px;width:21px;height:20px;background:#ff8000"></div>
<div class="t" style="left:2.5px;top:123px;font-size:14px;line-height:16px;-webkit-text-stroke:0;transform:scaleX(0.9286);color:rgba(214,208,200,.9);-webkit-text-stroke:0">6</div>
<div class="t" style="left:24px;top:123px;font-size:14px;line-height:16px;-webkit-text-stroke:0;transform:scaleX(0.9286);color:#ff8040">無印仔</div>
<div class="a" style="left:179px;top:121px;width:108px;height:20px;background:#c0c0c0"></div>
<div class="t" style="left:181px;top:123px;font-size:14px;line-height:16px;-webkit-text-stroke:0;transform:scaleX(0.9286);">Left the game</div>
<div class="t" style="left:290px;top:123px;font-size:14px;line-height:16px;-webkit-text-stroke:0;transform:scaleX(0.8822);">19:15</div>
<div class="t" style="left:334.4px;top:123px;font-size:14px;line-height:16px;-webkit-text-stroke:0;transform:scaleX(0.9054);">25s at 10:46</div>
<div class="t" style="left:418.9px;top:123px;font-size:14px;line-height:16px;-webkit-text-stroke:0;transform:scaleX(0.8961);">18s at 17:49</div>
<div class="t" style="left:498.9px;top:123px;font-size:14px;line-height:16px;-webkit-text-stroke:0;transform:scaleX(0.8822);">85( 88)</div>
<div class="a" style="left:0;top:141px;width:21px;height:21px;background:#00e000"></div>
<div class="t" style="left:2.5px;top:144px;font-size:14px;line-height:16px;-webkit-text-stroke:0;transform:scaleX(0.9286);color:rgba(214,208,200,.9);-webkit-text-stroke:0">7</div>
<div class="t" style="left:24px;top:144px;font-size:14px;line-height:16px;-webkit-text-stroke:0;transform:scaleX(0.9657);color:#20c000">chelseatong</div>
<div class="t" style="left:181px;top:144px;font-size:14px;line-height:16px;-webkit-text-stroke:0;transform:scaleX(0.9286);">Finished</div>
<div class="t" style="left:290px;top:144px;font-size:14px;line-height:16px;-webkit-text-stroke:0;transform:scaleX(0.8822);">21:10</div>
<div class="t" style="left:334.4px;top:144px;font-size:14px;line-height:16px;-webkit-text-stroke:0;transform:scaleX(0.9054);">13s at 10:24</div>
<div class="t" style="left:418.9px;top:144px;font-size:14px;line-height:16px;-webkit-text-stroke:0;transform:scaleX(0.8961);">13s at 14:26</div>
<div class="t" style="left:498.9px;top:144px;font-size:14px;line-height:16px;-webkit-text-stroke:0;transform:scaleX(0.8822);">70( 70)</div>
<div class="a" style="left:0;top:162px;width:21px;height:20px;background:#f080c8"></div>
<div class="t" style="left:2.5px;top:164px;font-size:14px;line-height:16px;-webkit-text-stroke:0;transform:scaleX(0.9286);color:rgba(214,208,200,.9);-webkit-text-stroke:0">8</div>
<div class="t" style="left:24px;top:164px;font-size:14px;line-height:16px;-webkit-text-stroke:0;transform:scaleX(0.9657);color:#ff80d0">SmileBoy</div>
<div class="t" style="left:181px;top:164px;font-size:14px;line-height:16px;-webkit-text-stroke:0;transform:scaleX(0.9286);">Finished</div>
<div class="t" style="left:290px;top:164px;font-size:14px;line-height:16px;-webkit-text-stroke:0;transform:scaleX(0.8822);">21:10</div>
<div class="t" style="left:330.9px;top:164px;font-size:14px;line-height:16px;-webkit-text-stroke:0;transform:scaleX(0.9054);">124s at 19:06</div>
<div class="t" style="left:418.9px;top:164px;font-size:14px;line-height:16px;-webkit-text-stroke:0;transform:scaleX(0.8961);">45s at 16:24</div>
<div class="t" style="left:498.9px;top:164px;font-size:14px;line-height:16px;-webkit-text-stroke:0;transform:scaleX(0.8822);">73( 86)</div>
<div class="a" style="left:0;top:182px;width:21px;height:20px;background:#c0c0c0"></div>
<div class="t" style="left:2.5px;top:184px;font-size:14px;line-height:16px;-webkit-text-stroke:0;transform:scaleX(0.9286);color:rgba(214,208,200,.9);-webkit-text-stroke:0">9</div>
<div class="t" style="left:24px;top:184px;font-size:14px;line-height:16px;-webkit-text-stroke:0;transform:scaleX(0.9286);color:#909090">絕‧鬼姬</div>
<div class="a" style="left:179px;top:182px;width:108px;height:20px;background:#c0c0c0"></div>
<div class="t" style="left:181px;top:184px;font-size:14px;line-height:16px;-webkit-text-stroke:0;transform:scaleX(0.9286);">Left the game</div>
<div class="t" style="left:290px;top:184px;font-size:14px;line-height:16px;-webkit-text-stroke:0;transform:scaleX(0.8822);">19:22</div>
<div class="t" style="left:334.4px;top:184px;font-size:14px;line-height:16px;-webkit-text-stroke:0;transform:scaleX(0.9054);">33s at 02:35</div>
<div class="t" style="left:418.9px;top:184px;font-size:14px;line-height:16px;-webkit-text-stroke:0;transform:scaleX(0.8961);">32s at 00:00</div>
<div class="t" style="left:498.9px;top:184px;font-size:14px;line-height:16px;-webkit-text-stroke:0;transform:scaleX(0.8822);">87( 94)</div>
<div class="a" style="left:0;top:202px;width:21px;height:20px;background:#80c0f0"></div>
<div class="t" style="left:2.5px;top:204px;font-size:14px;line-height:16px;-webkit-text-stroke:0;transform:scaleX(0.9286);color:rgba(214,208,200,.9);-webkit-text-stroke:0">10</div>
<div class="t" style="left:24px;top:204px;font-size:14px;line-height:16px;-webkit-text-stroke:0;transform:scaleX(0.9286);color:#60a8e0">銀雨</div>
<div class="a" style="left:179px;top:202px;width:108px;height:20px;background:#c0c0c0"></div>
<div class="t" style="left:181px;top:204px;font-size:14px;line-height:16px;-webkit-text-stroke:0;transform:scaleX(0.9286);">Left the game</div>
<div class="t" style="left:290px;top:204px;font-size:14px;line-height:16px;-webkit-text-stroke:0;transform:scaleX(0.8822);">19:25</div>
<div class="t" style="left:334.4px;top:204px;font-size:14px;line-height:16px;-webkit-text-stroke:0;transform:scaleX(0.9054);">12s at 08:42</div>
<div class="t" style="left:418.9px;top:204px;font-size:14px;line-height:16px;-webkit-text-stroke:0;transform:scaleX(0.8961);">10s at 14:55</div>
<div class="t" style="left:498.9px;top:204px;font-size:14px;line-height:16px;-webkit-text-stroke:0;transform:scaleX(0.8822);">82( 82)</div>
<div class="a" style="left:179px;top:222px;width:108px;height:1px;background:#c0c0c0"></div>
<div class="a" style="left:0;top:222px;width:21px;height:1px;background:#008000"></div>
</div>
<div class="sb" style="left:705px;top:1px;width:16px;height:223px"><svg class="a" style="left:5px;top:6px" width="8" height="5" viewBox="0 0 8 5"><path d="M0.200 4.500L3.700 0.400L7.200 4.500z" fill="#383838"/></svg><svg class="a" style="left:5px;top:212px" width="8" height="5" viewBox="0 0 8 5"><path d="M0.200 0.500L3.700 4.600L7.200 0.500z" fill="#383838"/></svg><div class="thumb" style="left:1px;top:19px;width:14px;height:156px"><div class="grip"></div></div></div>
</div>
<div class="t" style="left:304px;top:400px;transform:scaleX(0.8726);">Chat log</div>
<div class="cb" style="left:368px;top:399px"></div>
<div class="t" style="left:386px;top:399px;transform:scaleX(0.8881);">switch colors</div>
<div class="cb" style="left:472px;top:399px"></div>
<div class="t" style="left:490px;top:399px;transform:scaleX(0.8645);">swearing filter</div>
<div class="cb" style="left:664px;top:399px"></div>
<div class="t" style="left:682px;top:399px;transform:scaleX(0.8756);">dump replay for debugging</div>
<div class="btn" style="left:951px;top:389px;width:75px;height:21px"></div>
<div class="t" style="left:957px;top:393px;transform:scaleX(0.8938);">show actions</div>
<div class="edit" id="chat" style="left:296px;top:413px;width:724px;height:197px;border-bottom:none">
<div class="t" style="left:3px;top:5px;transform:scaleX(0.8991);">14:37</div>
<div class="t" style="left:38px;top:5px;transform:scaleX(0.8659);color:#1848ff">milkdes0</div>
<div class="t" style="left:114px;top:5px;transform:scaleX(0.8998);">All</div>
<div class="t" style="left:166px;top:5px;transform:scaleX(0.8435);">re</div>
<div class="t" style="left:3px;top:25px;transform:scaleX(0.8991);">14:41</div>
<div class="t" style="left:38px;top:25px;transform:scaleX(0.8484);color:#ff80d0">SmileBoy</div>
<div class="t" style="left:114px;top:25px;transform:scaleX(0.8998);">All</div>
<div class="t" style="left:166px;top:25px;transform:scaleX(0.8435);">re</div>
<div class="t c" style="left:175px;top:26px;">乜</div>
<div class="t" style="left:3px;top:44px;transform:scaleX(0.8991);">14:42</div>
<div class="t" style="left:38px;top:44px;transform:scaleX(0.9099);color:#b0a000">wongchun135</div>
<div class="t" style="left:114px;top:44px;transform:scaleX(0.8998);">All</div>
<div class="t c" style="left:166px;top:45px;">好撚</div>
<div class="t" style="left:190px;top:44px;transform:scaleX(0.8990);">on9</div>
<div class="t" style="left:3px;top:63px;transform:scaleX(0.8991);">14:46</div>
<div class="t" style="left:38px;top:63px;transform:scaleX(0.8484);color:#ff80d0">SmileBoy</div>
<div class="t" style="left:114px;top:63px;transform:scaleX(0.8998);">All</div>
<div class="t" style="left:166px;top:63px;transform:scaleX(0.8744);">45re</div>
<div class="t c" style="left:187px;top:64px;">你老母</div>
<div class="t" style="left:223px;top:63px;transform:scaleX(0.8990);">?</div>
<div class="t" style="left:3px;top:82px;transform:scaleX(0.8991);">15:08</div>
<div class="t" style="left:38px;top:82px;transform:scaleX(0.9099);color:#b0a000">wongchun135</div>
<div class="t" style="left:114px;top:82px;transform:scaleX(0.8998);">All</div>
<div class="t" style="left:166px;top:82px;transform:scaleX(0.8748);">i like</div>
<div class="t" style="left:3px;top:101px;transform:scaleX(0.8991);">15:10</div>
<div class="t" style="left:38px;top:101px;transform:scaleX(0.9099);color:#b0a000">wongchun135</div>
<div class="t" style="left:114px;top:101px;transform:scaleX(0.8998);">All</div>
<div class="t" style="left:166px;top:101px;transform:scaleX(0.9223);">ok??</div>
<div class="t" style="left:3px;top:120px;transform:scaleX(0.8991);">15:15</div>
<div class="t" style="left:38px;top:120px;transform:scaleX(0.8484);color:#ff80d0">SmileBoy</div>
<div class="t" style="left:114px;top:120px;transform:scaleX(0.8998);">All</div>
<div class="t c" style="left:166px;top:121px;">屌你</div>
<div class="t" style="left:3px;top:139px;transform:scaleX(0.8991);">15:17</div>
<div class="t" style="left:38px;top:139px;transform:scaleX(0.8484);color:#ff80d0">SmileBoy</div>
<div class="t" style="left:114px;top:139px;transform:scaleX(0.8998);">All</div>
<div class="t" style="left:166px;top:139px;transform:scaleX(0.9303);">ok?</div>
<div class="t" style="left:3px;top:159px;transform:scaleX(0.8991);">15:20</div>
<div class="t" style="left:38px;top:159px;transform:scaleX(0.9099);color:#b0a000">wongchun135</div>
<div class="t" style="left:114px;top:159px;transform:scaleX(0.8998);">All</div>
<div class="t" style="left:166px;top:159px;transform:scaleX(0.9468);">ok</div>
<div class="t" style="left:3px;top:178px;transform:scaleX(0.8991);">15:24</div>
<div class="t c" style="left:38px;top:179px;color:#909090">絕‧鬼姬</div>
<div class="t" style="left:114px;top:178px;transform:scaleX(0.8998);">All</div>
<div class="t c" style="left:166px;top:179px;">佢話佢傻</div>
<div class="sb" style="left:705px;top:1px;width:16px;height:194px"><svg class="a" style="left:5px;top:6px" width="8" height="5" viewBox="0 0 8 5"><path d="M0.200 4.500L3.700 0.400L7.200 4.500z" fill="#383838"/></svg><svg class="a" style="left:5px;top:183px" width="8" height="5" viewBox="0 0 8 5"><path d="M0.200 0.500L3.700 4.600L7.200 0.500z" fill="#383838"/></svg><div class="thumb" style="left:1px;top:52px;width:14px;height:39px"><div class="grip"></div></div></div>
</div>
<div class="a" style="left:8px;top:609px;width:1022px;height:1px;background:#fff"></div>
<div class="a" style="left:472px;top:413px;width:88px;height:1px;background:#f0f0f0"></div>
</body></html>
